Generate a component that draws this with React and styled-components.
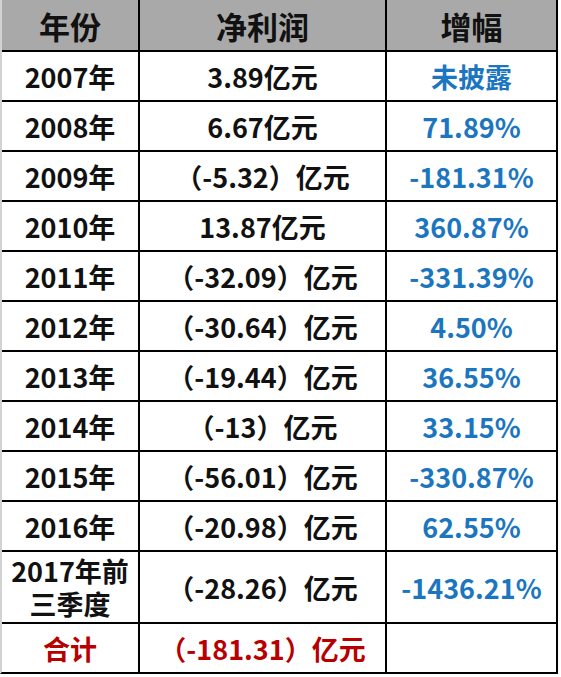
import React from "react";
import styled, { createGlobalStyle } from "styled-components";

const GlobalStyle = createGlobalStyle`
  html, body {
    margin: 0;
    padding: 0;
    background: #ffffff;
  }
`;

const Table = styled.div`
  display: grid;
  grid-template-columns: 136px 245px 169px;
  gap: 2px;
  width: max-content;
  background: #000;
  border-left: 2px solid #d2d2d2;
  border-right: 2px solid #000;
  border-bottom: 2px solid #000;
  font-family: "Noto Sans CJK SC", "Noto Sans", sans-serif;
`;

const Cell = styled.div`
  display: flex;
  align-items: center;
  justify-content: center;
  text-align: center;
  height: ${(p) => p.$h || 48}px;
  background: ${(p) => (p.$head ? "#a9a9a9" : "#fff")};
  color: ${(p) =>
    p.$tone === "blue" ? "#1c76bf" : p.$tone === "red" ? "#b80000" : "#111"};
  font-size: ${(p) => (p.$head ? 31 : 27)}px;
  font-weight: ${(p) => (p.$head ? 700 : 600)};
  line-height: 33px;
`;

const rows = [
  ["2007年", "3.89亿元", "未披露"],
  ["2008年", "6.67亿元", "71.89%"],
  ["2009年", "（-5.32）亿元", "-181.31%"],
  ["2010年", "13.87亿元", "360.87%"],
  ["2011年", "（-32.09）亿元", "-331.39%"],
  ["2012年", "（-30.64）亿元", "4.50%"],
  ["2013年", "（-19.44）亿元", "36.55%"],
  ["2014年", "（-13）亿元", "33.15%"],
  ["2015年", "（-56.01）亿元", "-330.87%"],
  ["2016年", "（-20.98）亿元", "62.55%"],
];

export default function App() {
  return (
    <>
      <GlobalStyle />
      <Table>
        <Cell $head $h={50}>年份</Cell>
        <Cell $head $h={50}>净利润</Cell>
        <Cell $head $h={50}>增幅</Cell>
        {rows.map(([year, profit, growth]) => (
          <React.Fragment key={year}>
            <Cell>{year}</Cell>
            <Cell>{profit}</Cell>
            <Cell $tone="blue">{growth}</Cell>
          </React.Fragment>
        ))}
        <Cell $h={70}>
          2017年前
          <br />
          三季度
        </Cell>
        <Cell $h={70}>（-28.26）亿元</Cell>
        <Cell $h={70} $tone="blue">-1436.21%</Cell>
        <Cell $tone="red">合计</Cell>
        <Cell $tone="red">（-181.31）亿元</Cell>
        <Cell />
      </Table>
    </>
  );
}
